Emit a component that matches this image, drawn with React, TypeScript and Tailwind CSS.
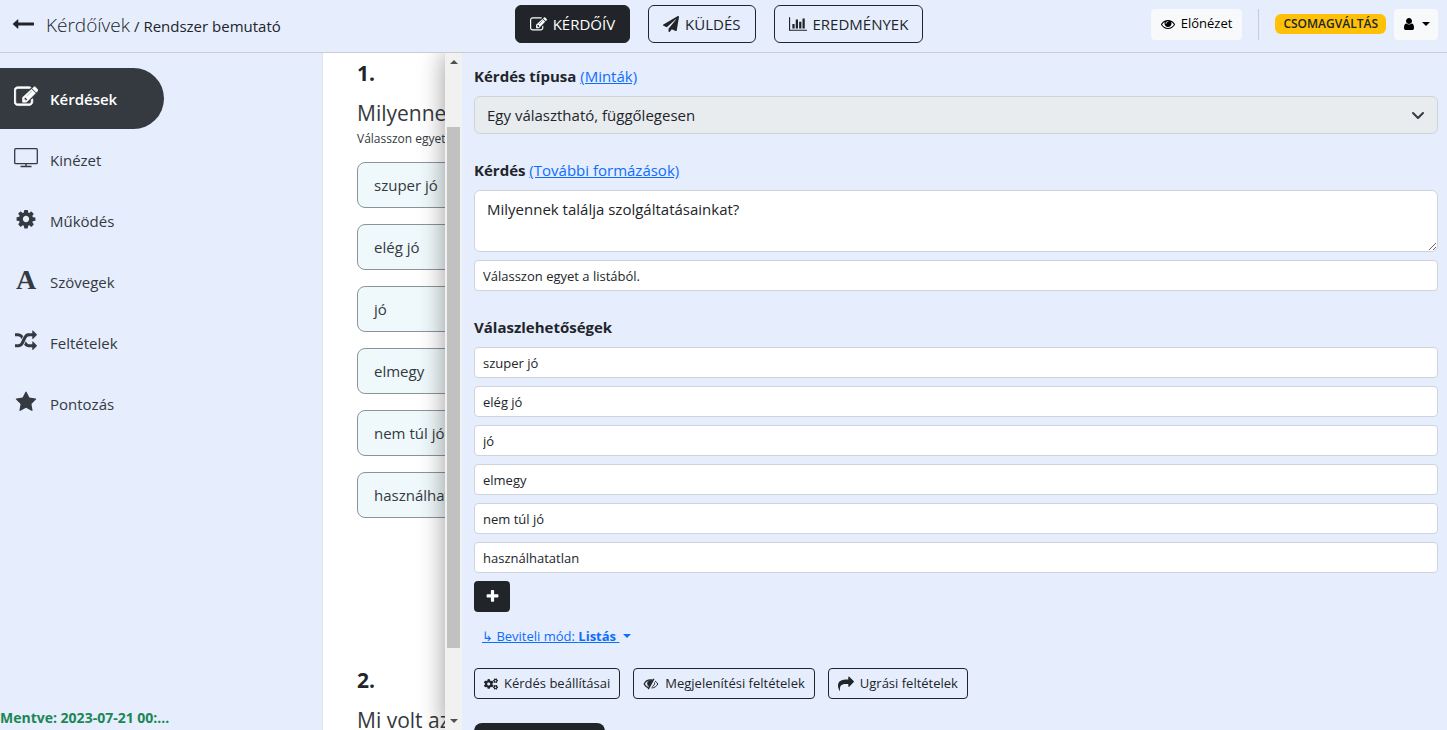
import type { ReactNode } from "react";
import { FaCogs, FaPaperPlane } from "react-icons/fa";

const paths = {
  back: "M1792 800v192q0 14-9 23t-23 9H512v224q0 21-19 29t-35-5L74 922q-10-10-10-23 0-14 10-24l384-354q16-14 35-6 19 9 19 29v224h1248q14 0 23 9t9 23z",
  edit: "M888 1184l116-116-152-152-116 116v56h96v96h56zm440-720q-16-16-33 1L945 815q-17 17-1 33t33-1l350-350q17-17 1-33zm80 594v190q0 119-84.5 203.500T1120 1536H288q-119 0-203.500-84.500T0 1248V416q0-119 84.500-203.500T288 128h832q63 0 117 25 15 7 18 23 3 17-9 29l-49 49q-14 14-32 8-23-6-45-6H288q-66 0-113 47t-47 113v832q0 66 47 113t113 47h832q66 0 113-47t47-113v-126q0-13 9-22l64-64q15-15 35-7t20 29zm-96-738l288 288-672 672H640V928zm444 132l-92 92-288-288 92-92q28-28 68-28t68 28l152 152q28 28 28 68t-28 68z",
  cog: "M1152 896q0-106-75-181t-181-75-181 75-75 181 75 181 181 75 181-75 75-181zm512-109v222q0 12-8 23t-20 13l-185 28q-19 54-39 91 35 50 107 138 10 12 10 25t-9 23q-27 37-99 108t-94 71q-12 0-26-9l-138-108q-44 23-91 38-16 136-29 186-7 28-36 28H785q-14 0-24.5-8.5T749 1635l-28-184q-49-16-90-37l-141 107q-10 9-25 9-14 0-25-11-126-114-165-168-7-10-7-23 0-12 8-23 15-21 51-66.5t54-70.5q-27-50-41-99l-183-27q-13-2-21-12.5t-8-23.5V785q0-12 8-23t19-13l186-28q14-46 39-92-40-57-107-138-10-12-10-24 0-10 9-23 26-36 98.5-107.5T465 288q13 0 26 10l138 107q44-23 91-38 16-136 29-186 7-28 36-28h222q14 0 24.5 8.5T1043 181l28 184q49 16 90 37l142-107q9-9 24-9 13 0 25 10 129 119 165 170 7 8 7 22 0 12-8 23-15 21-51 66.5t-54 70.5q26 50 41 98l183 28q13 2 21 12.5t8 23.5z",
  random: "M666 481q-60 92-137 273-22-45-37-72.500T451.500 618t-51-56.500-63-35T256 512H32q-14 0-23-9t-9-23V288q0-14 9-23t23-9h224q250 0 410 225zm1126 799q0 14-9 23l-320 320q-9 9-23 9-13 0-22.500-9.500t-9.500-22.500v-192q-32 0-85 .5t-81 1-73-1-71-5-64-10.500-63-18.500-58-28.500-59-40-55-53.500-56-69.500q59-93 136-273 22 45 37 72.500t40.500 63.500 51 56.500 63 35 81.500 14.500h256V960q0-14 9-23t23-9q12 0 24 10l319 319q9 9 9 23zm0-896q0 14-9 23l-320 320q-9 9-23 9-13 0-22.500-9.500t-9.500-22.500V512h-256q-48 0-87 15t-69 45-51 61.500-45 77.500q-32 62-78 171-29 66-49.500 111t-54 105-64 100-74 83-90 68.500-106.500 42-128 16.500H32q-14 0-23-9t-9-23v-192q0-14 9-23t23-9h224q48 0 87-15t69-45 51-61.500 45-77.500q32-62 78-171 29-66 49.500-111t54-105 64-100 74-83 90-68.500 106.500-42 128-16.500h256V64q0-14 9-23t23-9q12 0 24 10l319 319q9 9 9 23z",
  star: "M1728 647q0 22-26 48l-363 354 86 500q1 7 1 20 0 21-10.5 35.5T1385 1619q-19 0-40-12l-449-236-449 236q-22 12-40 12-21 0-31.5-14.5T365 1569q0-6 2-20l86-500L89 695q-25-27-25-48 0-37 56-46l502-73L847 73q19-41 49-41t49 41l225 455 502 73q56 9 56 46z",
  eye: "M1664 960q-152-236-381-353 61 104 61 225 0 185-131.5 316.5T896 1280t-316.500-131.500T448 832q0-121 61-225-229 117-381 353 133 205 333.500 326.500T896 1408t434.500-121.500T1664 960zM944 576q0-20-14-34t-34-14q-125 0-214.500 89.500T592 832q0 20 14 34t34 14 34-14 14-34q0-86 61-147t147-61q20 0 34-14t14-34zm848 384q0 34-20 69-140 230-376.500 368.500T896 1536t-499.500-139T20 1029Q0 994 0 960t20-69q140-229 376.500-368T896 384t499.500 139T1772 891q20 35 20 69z",
  user: "M1536 1399q0 109-62.5 187t-150.5 78H469q-88 0-150.5-78T256 1399q0-85 8.500-160.500t31.500-152 58.500-131 94-89T583 832q131 128 313 128t313-128q76 0 134.500 34.500t94 89 58.500 131 31.500 152 8.500 160.500zm-256-887q0 159-112.500 271.500T896 896 624.500 783.500 512 512t112.500-271.500T896 128t271.500 112.500T1280 512z",
  share: "M1792 640q0 26-19 45l-512 512q-19 19-45 19t-45-19-19-45V896H928q-98 0-175.5 6t-154 21.500-133 42.500-105.500 69.500-80 101-48.500 138.500-17.500 181q0 55 5 123 0 6 2.500 23.500t2.500 26.500q0 15-8.500 25t-23.500 10q-16 0-28-17-7-9-13-22t-13.500-30-10.500-24Q0 1286 0 1120q0-199 53-333 162-403 875-403h224V128q0-26 19-45t45-19 45 19l512 512q19 19 19 45z",
  plus: "M1600 736v192q0 40-28 68t-68 28h-416v416q0 40-28 68t-68 28H800q-40 0-68-28t-28-68v-416H288q-40 0-68-28t-28-68V736q0-40 28-68t68-28h416V224q0-40 28-68t68-28h192q40 0 68 28t28 68v416h416q40 0 68 28t28 68z",
};

function Icon({ name, className }: { name: keyof typeof paths; className: string }) {
  return (
    <svg viewBox="0 0 1792 1792" fill="currentColor" aria-hidden="true" className={`shrink-0 ${className}`}>
      <path d={paths[name]} />
    </svg>
  );
}

function ChartIcon() {
  return (
    <svg viewBox="0 0 2048 1792" fill="currentColor" aria-hidden="true" className="h-4 w-[18px] shrink-0">
      <path d="M640 896v512H384V896h256zm384-512v1024H768V384h256zm1024 1152v128H0V128h128v1408h1920zM1408 640v768h-256V640h256zm384-384v1152h-256V256h256z" />
    </svg>
  );
}

function MonitorIcon() {
  return (
    <svg viewBox="0 0 24 20" fill="none" stroke="currentColor" aria-hidden="true" className="h-5 w-6">
      <rect x="0.7" y="0.7" width="22.600" height="15" rx="1" strokeWidth="1.3" />
      <path d="M12 15.500v2.500M6.500 18.500h11" strokeWidth="1.400" />
    </svg>
  );
}

function HalfEyeIcon() {
  return (
    <svg viewBox="0 0 16 12" fill="none" stroke="currentColor" aria-hidden="true" className="h-3 w-4 shrink-0">
      <path d="M9.500 2.100C5.500 1.300 2.600 3.200 1.200 6c.9 1.800 2.300 3.100 4.100 3.700" strokeWidth="1.300" />
      <path d="M9.300 2.300C6.500 1.900 4.300 3.400 4.400 5.600c0 1.200.6 2.200 1.600 2.900z" fill="currentColor" strokeWidth="0.500" />
      <path d="M10.800.8 5.200 11.200" strokeWidth="1.400" />
      <path d="M12 3c1.200.7 2.100 1.700 2.800 3-1.200 2.300-3.300 3.800-6.300 4M11.500 4.500c.4 1.700-.5 3.200-2.200 3.900" strokeWidth="1" />
    </svg>
  );
}

function Caret({ className }: { className: string }) {
  return (
    <svg viewBox="0 0 8 4" fill="currentColor" aria-hidden="true" className={`h-1 w-2 shrink-0 ${className}`}>
      <path d="M0 0h8L4 4z" />
    </svg>
  );
}

const menu: { label: string; icon: ReactNode }[] = [
  { label: "Kérdések", icon: <Icon name="edit" className="size-6 stroke-current stroke-[50]" /> },
  { label: "Kinézet", icon: <MonitorIcon /> },
  { label: "Működés", icon: <Icon name="cog" className="size-[22px]" /> },
  { label: "Szövegek", icon: <span className="font-['Liberation_Serif',serif] text-[28px] leading-6 font-bold">A</span> },
  { label: "Feltételek", icon: <Icon name="random" className="size-[22px]" /> },
  { label: "Pontozás", icon: <Icon name="star" className="size-[22px]" /> },
];

const answers = ["szuper jó", "elég jó", "jó", "elmegy", "nem túl jó", "használhatatlan"];

function Header() {
  const tab = "flex h-[38px] items-center gap-1.5 rounded-md border border-[#212529] px-3.5";

  return (
    <header className="flex h-[53px] shrink-0 items-center border-b border-[#cccccc] pr-[9px] pb-1">
      <div className="flex flex-1 items-center">
        <a href="#" aria-label="Vissza" className="mr-3 ml-3">
          <Icon name="back" className="size-[22px]" />
        </a>
        <h1 className="flex items-baseline gap-1 pt-0.5 whitespace-nowrap">
          <a href="#" className="text-[19px] font-light">Kérdőívek</a>
          <span className="text-[15px]">/ Rendszer bemutató</span>
        </h1>
      </div>
      <nav className="flex gap-[18px] text-[15px]">
        <button className={`${tab} bg-[#212529] text-white`}>
          <Icon name="edit" className="size-[17px]" />
          KÉRDŐÍV
        </button>
        <button className={tab}>
          <FaPaperPlane className="size-4" />
          KÜLDÉS
        </button>
        <button className={tab}>
          <ChartIcon />
          EREDMÉNYEK
        </button>
      </nav>
      <div className="flex flex-1 items-center justify-end">
        <button className="flex h-[31px] items-center gap-1.5 rounded bg-[#f8f9fa] px-2.5 text-[13px] text-black">
          <Icon name="eye" className="size-3.5" />
          Előnézet
        </button>
        <div className="mx-4 h-[31px] w-px bg-[#cccccc]" />
        <a href="#" className="flex h-5 items-center rounded-md bg-[#ffc107] px-2 text-[12px] font-semibold">
          CSOMAGVÁLTÁS
        </a>
        <button aria-label="Fiók" className="ml-2 flex h-[31px] items-center gap-1.5 rounded bg-[#f8f9fa] px-2 text-black">
          <Icon name="user" className="size-3.5" />
          <Caret className="" />
        </button>
      </div>
    </header>
  );
}

function Sidebar() {
  return (
    <aside className="flex w-[322px] shrink-0 flex-col justify-between pt-[15px] shadow-sm">
      <nav>
        {menu.map((item, i) => (
          <a
            key={item.label}
            href="#"
            className={`flex h-[61px] w-[164px] items-center rounded-r-full pl-3 text-[15px] ${
              i === 0 ? "bg-[#343a40] font-semibold text-white" : "font-medium text-[#343a40]"
            }`}
          >
            <span className="mr-2.5 flex w-7 justify-center pb-1">{item.icon}</span>
            <span className="pt-0.5">{item.label}</span>
          </a>
        ))}
      </nav>
      <p className="text-[14px] leading-6 font-bold text-[#198754]">Mentve: 2023-07-21 00:...</p>
    </aside>
  );
}

function Preview() {
  return (
    <section className="w-[123px] shrink-0 overflow-hidden border-l border-[#dde2ec] bg-white pl-[34px] whitespace-nowrap">
      <h2 className="pt-1 text-[21px] leading-8 font-bold">1.</h2>
      <h3 className="mt-2 text-[21px] leading-8 font-medium text-[#343a40]">Milyennek találja szolgáltatásainkat?</h3>
      <p className="text-[12px] leading-5 text-[#343a40]">Válasszon egyet a listából.</p>
      <ul className="mt-[13px] flex w-[400px] flex-col gap-4 text-[15px] text-[#343a40]">
        {answers.map((answer) => (
          <li key={answer} className="flex h-[46px] items-center rounded-lg border border-[#8d9499] bg-[#eff8fa] px-4">
            {answer}
          </li>
        ))}
      </ul>
      <h2 className="mt-[146px] text-[21px] leading-8 font-bold">2.</h2>
      <h3 className="mt-2 text-[21px] leading-8 font-medium text-[#343a40]">Mi volt az oka?</h3>
    </section>
  );
}

function Scrollbar() {
  return (
    <div className="flex w-[17px] shrink-0 flex-col items-center justify-between bg-[#f1f1f1] py-[7px] text-[#505050]">
      <Caret className="rotate-180" />
      <div className="mt-[63px] mb-[71px] w-[13px] flex-1 bg-[#c1c1c1]" />
      <Caret className="" />
    </div>
  );
}

function Editor() {
  const input = "h-[31px] w-full rounded border border-[#ced4da] bg-white px-2 text-[13px]";
  const button = "flex h-[31px] items-center gap-1.5 rounded border border-[#212529] px-[9px] text-[13px]";
  const link = "text-[#0d6efd] underline";

  return (
    <section className="relative flex min-w-0 flex-1 bg-[#e6edfd] shadow-[0_0_24px_rgba(0,0,0,0.4)]">
      <Scrollbar />
      <form className="min-w-0 flex-1 overflow-hidden pt-[11px] pr-[9px] pl-3 text-[15px]">
        <div className="mb-2 leading-6">
          <label htmlFor="type" className="font-bold">Kérdés típusa</label>{" "}
          <a href="#" className={link}>(Minták)</a>
        </div>
        <div className="grid items-center">
          <select
            id="type"
            disabled
            className="col-start-1 row-start-1 h-[38px] w-full appearance-none rounded-md border border-[#ced4da] bg-[#e9ecef] px-3 opacity-100"
          >
            <option>Egy választható, függőlegesen</option>
          </select>
          <svg
            viewBox="0 0 16 16"
            fill="none"
            stroke="#343a40"
            strokeWidth="2"
            strokeLinecap="round"
            strokeLinejoin="round"
            aria-hidden="true"
            className="pointer-events-none col-start-1 row-start-1 mr-3 size-4 justify-self-end"
          >
            <path d="m3 6 5 5 5-5" />
          </svg>
        </div>

        <div className="mt-6 mb-2 leading-6">
          <label htmlFor="question" className="font-bold">Kérdés</label>{" "}
          <a href="#" className={link}>(További formázások)</a>
        </div>
        <textarea
          id="question"
          className="block h-[62px] w-full rounded-md border border-[#ced4da] bg-white px-3 py-1.5 leading-6"
          defaultValue="Milyennek találja szolgáltatásainkat?"
        />
        <input aria-label="Leírás" className={`${input} mt-2`} defaultValue="Válasszon egyet a listából." />

        <h4 className="mt-6 mb-2 leading-6 font-bold">Válaszlehetőségek</h4>
        <div className="flex flex-col gap-2">
          {answers.map((answer) => (
            <input key={answer} aria-label="Válasz" className={input} defaultValue={answer} />
          ))}
        </div>
        <button
          type="button"
          aria-label="Új válasz"
          className="mt-2 flex h-[31px] w-9 items-center justify-center rounded bg-[#212529] text-white"
        >
          <Icon name="plus" className="size-[15px]" />
        </button>
        <a href="#" className="mt-3 ml-2 flex w-fit items-center text-[13px] leading-6 text-[#0d6efd]">
          <span className="whitespace-pre underline">
            ↳ Beviteli mód: <b>Listás</b>{" "}
          </span>
          <Caret className="ml-1" />
        </a>

        <div className="mt-5 flex gap-[13px]">
          <button type="button" className={button}>
            <FaCogs className="size-3.5" />
            Kérdés beállításai
          </button>
          <button type="button" className={button}>
            <HalfEyeIcon />
            Megjelenítési feltételek
          </button>
          <button type="button" className={button}>
            <Icon name="share" className="size-4" />
            Ugrási feltételek
          </button>
        </div>
        <button type="button" aria-label="Mentés" className="mt-6 block h-12 w-[131px] rounded-lg bg-[#212529]" />
      </form>
    </section>
  );
}

export default function App() {
  return (
    <div className="flex h-screen flex-col overflow-hidden bg-[#e6edfd] font-['Open_Sans',sans-serif] text-[#212529]">
      <Header />
      <main className="flex min-h-0 flex-1 overflow-hidden">
        <Sidebar />
        <Preview />
        <Editor />
      </main>
    </div>
  );
}
